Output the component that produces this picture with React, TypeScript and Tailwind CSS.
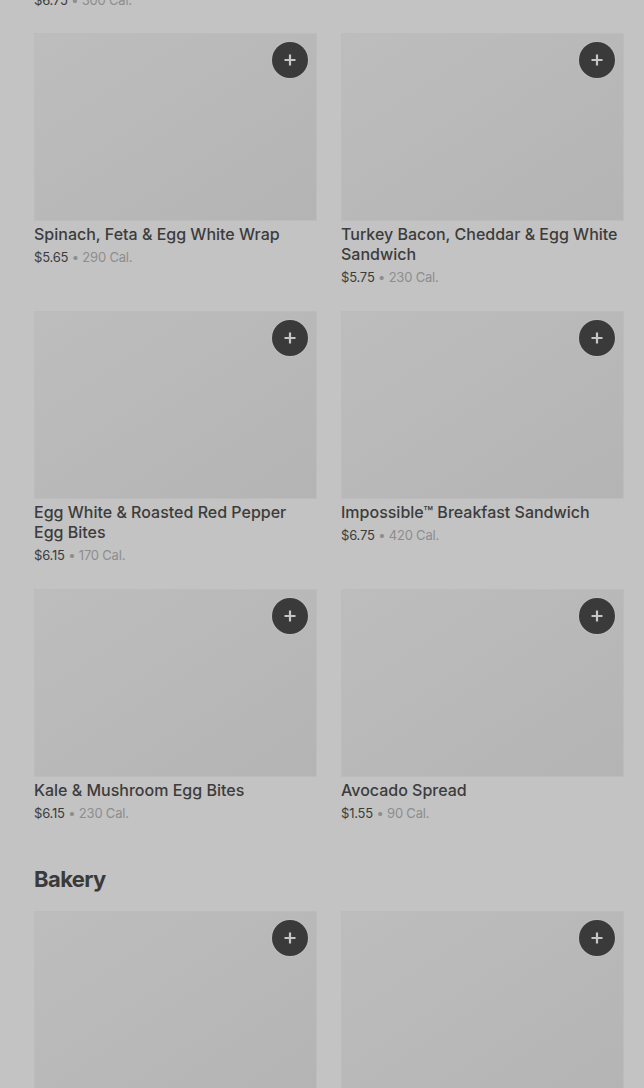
import React from "react";

type Item = { name: string; price: string; cal: string };

const rows: Item[][] = [
  [
    { name: "Spinach, Feta & Egg White Wrap", price: "$5.65", cal: "290 Cal." },
    { name: "Turkey Bacon, Cheddar & Egg White Sandwich", price: "$5.75", cal: "230 Cal." },
  ],
  [
    { name: "Egg White & Roasted Red Pepper Egg Bites", price: "$6.15", cal: "170 Cal." },
    { name: "Impossible™ Breakfast Sandwich", price: "$6.75", cal: "420 Cal." },
  ],
  [
    { name: "Kale & Mushroom Egg Bites", price: "$6.15", cal: "230 Cal." },
    { name: "Avocado Spread", price: "$1.55", cal: "90 Cal." },
  ],
];

function PlusButton() {
  return (
    <button className="absolute top-[8px] right-[8px] w-9 h-9 rounded-full bg-[#3a3a3a] flex items-center justify-center shadow-[0_0_0_1px_rgba(200,200,200,0.35)]">
      <svg width="14" height="14" viewBox="0 0 14 14" fill="none">
        <path d="M7 1.5v11M1.5 7h11" stroke="#c6c6c6" strokeWidth="2.2" />
      </svg>
    </button>
  );
}

function Price({ price, cal }: { price: string; cal: string }) {
  return (
    <div className="text-[13px] leading-5 tracking-[-0.2px] text-[#3c3c3c]">
      {price} <span className="text-[#8d8d8d]">• {cal}</span>
    </div>
  );
}

function Card({ item, noText }: { item: Item; noText?: boolean }) {
  return (
    <div className="flex flex-col">
      <div className="relative h-[188px] bg-gradient-to-br from-[#bdbdbd] to-[#b4b4b4] border border-[#bcbcbc]">
        <PlusButton />
      </div>
      {!noText && (
        <>
          <div className="mt-[3px] text-[16px] leading-5 font-medium text-[#3c3c3c]">{item.name}</div>
          <div className="mt-[3px]">
            <Price price={item.price} cal={item.cal} />
          </div>
        </>
      )}
    </div>
  );
}

export default function App() {
  return (
    <div
      className="w-[644px] h-[1088px] overflow-hidden bg-[#c3c3c3] pl-[34px] pr-[20px]"
      style={{ fontFamily: "Inter, 'Noto Sans', sans-serif" }}
    >
      <div className="-mt-[10px]">
        <Price price="$6.75" cal="300 Cal." />
      </div>
      <div className="mt-[23px] grid grid-cols-2 gap-x-6 gap-y-6 items-start">
        {rows.flat().map((it, i) => (
          <Card key={i} item={it} />
        ))}
      </div>
      <h2 className="mt-[40px] text-[22px] leading-8 font-bold tracking-[-0.6px] text-[#3a3a3a]">Bakery</h2>
      <div className="mt-[16px] grid grid-cols-2 gap-x-6">
        <Card item={{ name: "", price: "", cal: "" }} noText />
        <Card item={{ name: "", price: "", cal: "" }} noText />
      </div>
    </div>
  );
}
